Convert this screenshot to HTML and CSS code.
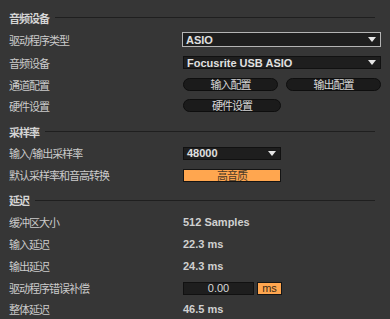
FILE: index.html
```html
<!DOCTYPE html>
<html lang="zh">
<head>
    <meta charset="UTF-8">
    <meta name="viewport" content="width=device-width, initial-scale=1.0">
    <title>音频设置</title>
    <link rel="stylesheet" href="styles.css">
</head>
<body>

    <div class="prefs">
        <div class="head"><span>音频设备</span><i class="rule"></i></div>
        <div class="row tall">
            <span class="label">驱动程序类型</span>
            <div class="select focus wide"><span>ASIO</span><i class="arrow"></i></div>
        </div>
        <div class="row tall">
            <span class="label">音频设备</span>
            <div class="select wide"><span>Focusrite USB ASIO</span><i class="arrow"></i></div>
        </div>
        <div class="row">
            <span class="label">通道配置</span>
            <div class="pair">
                <button class="pill">输入配置</button>
                <button class="pill">输出配置</button>
            </div>
        </div>
        <div class="row">
            <span class="label">硬件设置</span>
            <button class="pill half">硬件设置</button>
        </div>

        <div class="head gap"><span>采样率</span><i class="rule"></i></div>
        <div class="row mid">
            <span class="label">输入/输出采样率</span>
            <div class="select half"><span>48000</span><i class="arrow"></i></div>
        </div>
        <div class="row mid">
            <span class="label">默认采样率和音高转换</span>
            <button class="toggle half">高音质</button>
        </div>

        <div class="head gap2"><span>延迟</span><i class="rule"></i></div>
        <div class="row mid">
            <span class="label">缓冲区大小</span>
            <span class="value">512 Samples</span>
        </div>
        <div class="row mid">
            <span class="label">输入延迟</span>
            <span class="value">22.3 ms</span>
        </div>
        <div class="row mid">
            <span class="label">输出延迟</span>
            <span class="value">24.3 ms</span>
        </div>
        <div class="row mid">
            <span class="label">驱动程序错误补偿</span>
            <div class="comp">
                <span class="num">0.00</span>
                <button class="toggle unit">ms</button>
            </div>
        </div>
        <div class="row short">
            <span class="label">整体延迟</span>
            <span class="value">46.5 ms</span>
        </div>
    </div>

</body>
</html>
```

FILE: styles.css
```css
body {
    margin: 0;
    background: #363636;
    color: #cbcbcb;
    font-family: "Liberation Sans", "Noto Sans CJK SC", sans-serif;
    font-size: 11px;
}
.prefs {
    padding: 7px 9px 0 9px;
}
.head {
    display: flex;
    align-items: center;
    height: 21px;
    width: 366px;
    font-family: "Noto Sans CJK SC", sans-serif;
    font-weight: bold;
    letter-spacing: -1px;
    color: #d4d4d4;
}
.head.gap {
    margin-top: 5px;
}
.head.gap2 {
    margin-top: 3px;
    height: 22px;
}
.rule {
    flex: 1;
    height: 1px;
    margin-left: 6px;
    background: #1f1f1f;
}
.row {
    display: flex;
    align-items: center;
    height: 21px;
}
.row.tall {
    height: 23px;
}
.row.mid {
    height: 22px;
}
.row.short {
    height: 20px;
}
.label {
    width: 174px;
    flex-shrink: 0;
    font-family: "Noto Sans CJK SC", sans-serif;
    letter-spacing: -1px;
}
.value {
    font-weight: bold;
    color: #d0d0d0;
}
.select {
    display: flex;
    align-items: center;
    justify-content: space-between;
    box-sizing: border-box;
    height: 13px;
    padding: 0 4px 0 3px;
    background: #1e1e1e;
    border: 1px solid #111;
    font-weight: bold;
    color: #e0e0e0;
}
.select.wide {
    width: 198px;
}
.select.focus {
    height: 15px;
    margin-left: -1px;
    width: 200px;
    border-color: #b4b4b4;
}
.half {
    width: 98px;
}
.arrow {
    width: 0;
    height: 0;
    border-left: 4px solid transparent;
    border-right: 4px solid transparent;
    border-top: 5px solid #e6e6e6;
}
.pair {
    display: flex;
    gap: 8px;
}
.pill {
    box-sizing: border-box;
    width: 95px;
    height: 13px;
    padding: 0;
    background: #1b1b1b;
    border: 1px solid #0e0e0e;
    border-radius: 7px;
    color: #d6d6d6;
    font-family: "Noto Sans CJK SC", sans-serif;
    font-size: 11px;
    line-height: 11px;
    letter-spacing: -1px;
}
.pill.half {
    width: 98px;
}
.toggle {
    box-sizing: border-box;
    height: 13px;
    padding: 0;
    background: #ffa64f;
    border: 1px solid #141414;
    color: #4a3a28;
    font-family: "Noto Sans CJK SC", sans-serif;
    font-size: 11px;
    line-height: 11px;
    letter-spacing: -1px;
}
.comp {
    display: flex;
    gap: 3px;
}
.num {
    box-sizing: border-box;
    width: 71px;
    height: 13px;
    line-height: 11px;
    text-align: center;
    background: #1e1e1e;
    border: 1px solid #111;
    color: #d8d8d8;
}
.unit {
    width: 25px;
    font-family: "Liberation Sans", sans-serif;
    letter-spacing: 0;
    color: #3a2a18;
}
```
